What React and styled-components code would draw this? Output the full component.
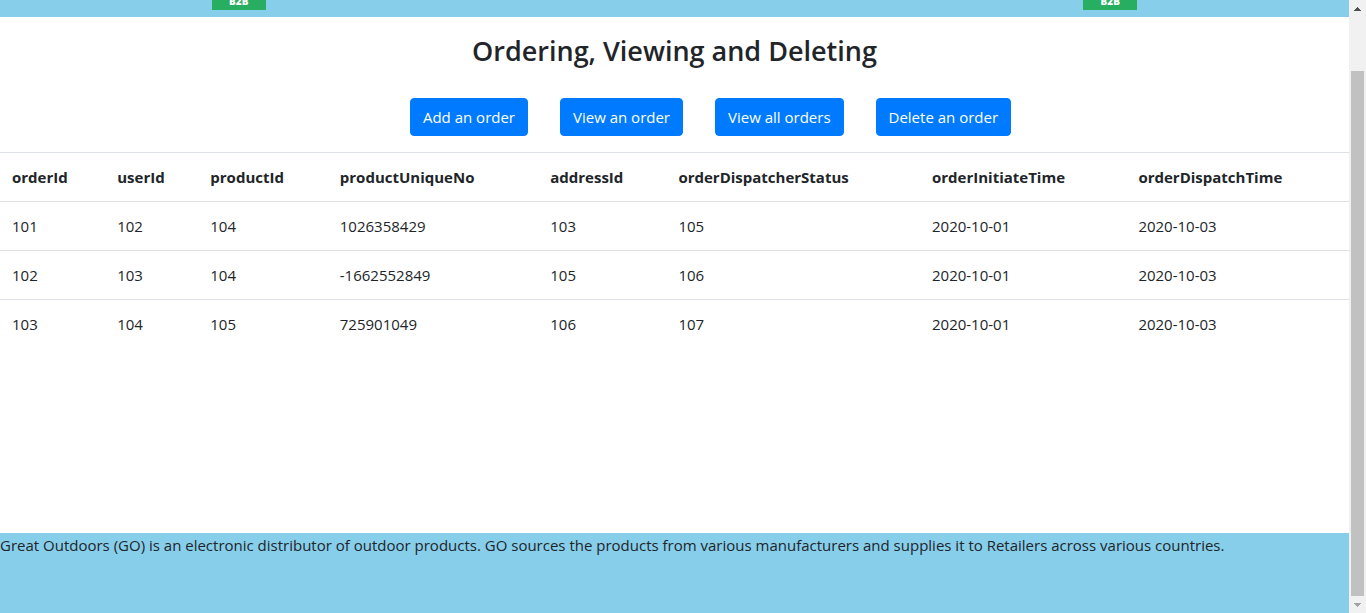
import React from "react";
import styled, { createGlobalStyle } from "styled-components";

const GlobalStyle = createGlobalStyle`
  *, *::before, *::after { box-sizing: border-box; }
  body {
    margin: 0;
    background: #fff;
    color: #212529;
    font-family: "Segoe UI", "Open Sans", sans-serif;
    font-size: 15px;
    line-height: 24px;
  }
`;

const Window = styled.div`
  display: grid;
  grid-template-columns: minmax(0, 1fr) 17px;
  min-height: 100vh;
`;

const Page = styled.div`
  display: flex;
  flex-direction: column;
`;

const Header = styled.header`
  display: flex;
  justify-content: space-between;
  padding: 0 15.7% 7px;
  background: skyblue;
`;

const Logo = styled.div`
  display: flex;
  align-items: flex-end;
  justify-content: center;
  width: 54px;
  height: 10px;
  padding-bottom: 3px;
  overflow: hidden;
  background: #27ae60;
  color: #fff;
  font-size: 10px;
  font-weight: 800;
  line-height: 12px;
`;

const Main = styled.main`
  flex: 1;
`;

const Title = styled.h3`
  margin: 0;
  padding: 17px 0 30px;
  font-size: 27px;
  font-weight: 600;
  line-height: 34px;
  text-align: center;
`;

const Actions = styled.nav`
  display: flex;
  justify-content: center;
  gap: 32px;
  padding: 0 0 16px 72px;
`;

const Button = styled.button`
  padding: 6px 12px;
  border: 1px solid #007bff;
  border-radius: 4px;
  background: #007bff;
  color: #fff;
  font: inherit;
  cursor: pointer;
`;

const Table = styled.table`
  width: 100%;
  border-collapse: collapse;
  table-layout: fixed;
`;

const Column = styled.col`
  width: ${(p) => p.$share};
`;

const HeadCell = styled.th`
  padding: 12px;
  border-top: 1px solid #dee2e6;
  font-weight: 700;
  text-align: left;
`;

const Cell = styled.td`
  padding: 12px;
  border-top: 1px solid #dee2e6;
`;

const Footer = styled.footer`
  min-height: 80px;
  background: skyblue;
`;

const ScrollBar = styled.aside`
  display: flex;
  flex-direction: column;
  background: #f1f1f1;
`;

const ScrollArrow = styled.button`
  display: flex;
  align-items: center;
  justify-content: center;
  height: 17px;
  padding: 0;
  border: 0;
  background: transparent;
  color: ${(p) => (p.$dim ? "#a3a3a3" : "#505050")};
`;

const ScrollTrack = styled.div`
  display: flex;
  flex: 1;
  flex-direction: column;
  justify-content: flex-end;
  padding: 0 2px;
`;

const ScrollThumb = styled.div`
  height: 90.7%;
  background: #c1c1c1;
`;

const columns = [
  ["orderId", "7.8%"],
  ["userId", "6.9%"],
  ["productId", "9.6%"],
  ["productUniqueNo", "15.6%"],
  ["addressId", "9.5%"],
  ["orderDispatcherStatus", "18.8%"],
  ["orderInitiateTime", "15.3%"],
  ["orderDispatchTime", "16.5%"],
];

const orders = [
  ["101", "102", "104", "1026358429", "103", "105", "2020-10-01", "2020-10-03"],
  ["102", "103", "104", "-1662552849", "105", "106", "2020-10-01", "2020-10-03"],
  ["103", "104", "105", "725901049", "106", "107", "2020-10-01", "2020-10-03"],
];

const actions = ["Add an order", "View an order", "View all orders", "Delete an order"];

export default function App() {
  return (
    <>
      <GlobalStyle />
      <Window>
        <Page>
          <Header>
            <Logo>B2B</Logo>
            <Logo>B2B</Logo>
          </Header>
          <Main>
            <Title>Ordering, Viewing and Deleting</Title>
            <Actions>
              {actions.map((label) => (
                <Button key={label} type="button">{label}</Button>
              ))}
            </Actions>
            <Table>
              <colgroup>
                {columns.map(([name, share]) => (
                  <Column key={name} $share={share} />
                ))}
              </colgroup>
              <thead>
                <tr>
                  {columns.map(([name]) => (
                    <HeadCell key={name} scope="col">{name}</HeadCell>
                  ))}
                </tr>
              </thead>
              <tbody>
                {orders.map((order) => (
                  <tr key={order[0]}>
                    {order.map((value, i) => (
                      <Cell key={columns[i][0]}>{value}</Cell>
                    ))}
                  </tr>
                ))}
              </tbody>
            </Table>
          </Main>
          <Footer>
            Great Outdoors (GO) is an electronic distributor of outdoor products. GO sources the
            products from various manufacturers and supplies it to Retailers across various
            countries.
          </Footer>
        </Page>
        <ScrollBar>
          <ScrollArrow type="button" aria-label="Scroll up">
            <svg width="7" height="4" viewBox="0 0 7 4" fill="currentColor" shapeRendering="crispEdges">
              <path d="M3 0h1v1h1v1h1v1h1v1H0V3h1V2h1V1h1z" />
            </svg>
          </ScrollArrow>
          <ScrollTrack>
            <ScrollThumb />
          </ScrollTrack>
          <ScrollArrow type="button" aria-label="Scroll down" $dim>
            <svg width="7" height="4" viewBox="0 0 7 4" fill="currentColor" shapeRendering="crispEdges">
              <path d="M0 0h7v1H6v1H5v1H4v1H3V3H2V2H1V1H0z" />
            </svg>
          </ScrollArrow>
        </ScrollBar>
      </Window>
    </>
  );
}
